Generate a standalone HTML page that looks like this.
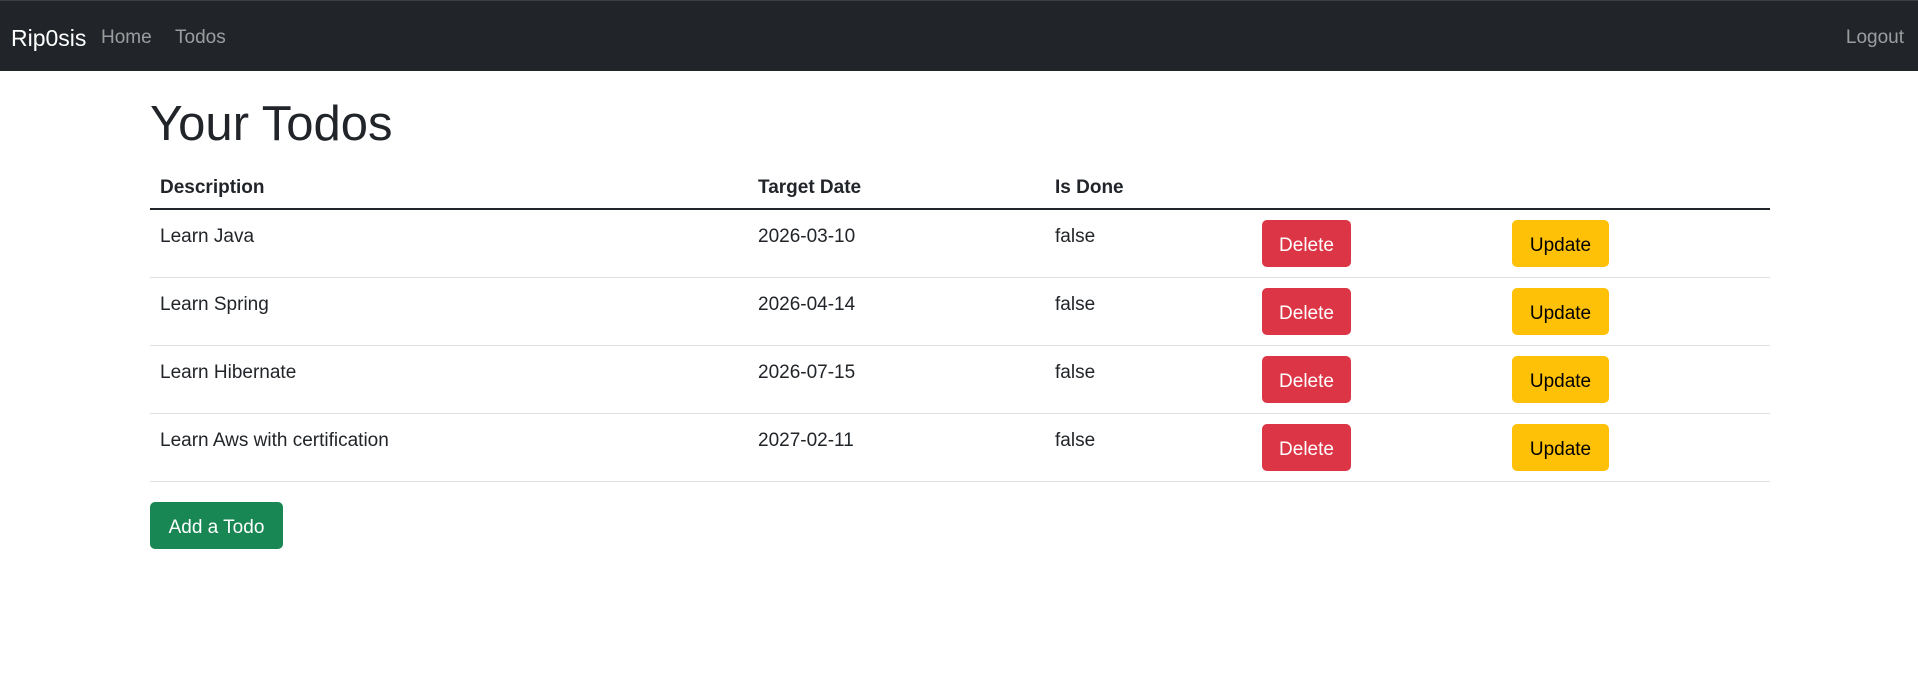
<!DOCTYPE html>
<html><head><meta charset="utf-8"><style>
*{margin:0;padding:0;box-sizing:border-box}
body{width:1918px;height:675px;background:#fff;font-family:"Liberation Sans",sans-serif;color:#212529;position:relative;overflow:hidden;font-size:19px}
.nav{position:absolute;left:0;top:0;width:1918px;height:71px;background:#212529;border-top:1px solid #3a3f44}
.a{position:absolute;white-space:nowrap}
.nav .a{top:26px;color:rgba(255,255,255,.55);font-size:19px}
.h1{font-size:49px;font-weight:500;top:96px;left:150px}
.th{font-weight:bold;top:177px}
.td{top:226px}
.line{position:absolute;left:150px;width:1620px;height:1px;background:#dee2e6}
.btn{position:absolute;height:47px;border-radius:5px;font-size:19px;display:flex;align-items:center;justify-content:center;padding-top:4px}
.del{background:#dc3545;color:#fff;left:1262px;width:89px}
.upd{background:#ffc107;color:#000;left:1512px;width:97px}
</style></head><body>
<div class="nav">
<div class="a" style="left:11px;top:24px;color:#fff;font-size:23px">Rip0sis</div>
<div class="a" style="left:101px">Home</div>
<div class="a" style="left:175px">Todos</div>
<div class="a" style="right:14px">Logout</div>
</div>
<div class="a h1">Your Todos</div>
<div class="a th" style="left:160px">Description</div>
<div class="a th" style="left:758px">Target Date</div>
<div class="a th" style="left:1055px">Is Done</div>
<div class="line" style="top:208px;height:2px;background:#212529"></div>

<div class="a td" style="left:160px">Learn Java</div>
<div class="a td" style="left:758px">2026-03-10</div>
<div class="a td" style="left:1055px">false</div>
<div class="btn del" style="top:220px">Delete</div>
<div class="btn upd" style="top:220px">Update</div>
<div class="line" style="top:277px"></div>

<div class="a td" style="left:160px;top:294px">Learn Spring</div>
<div class="a td" style="left:758px;top:294px">2026-04-14</div>
<div class="a td" style="left:1055px;top:294px">false</div>
<div class="btn del" style="top:288px">Delete</div>
<div class="btn upd" style="top:288px">Update</div>
<div class="line" style="top:345px"></div>

<div class="a td" style="left:160px;top:362px">Learn Hibernate</div>
<div class="a td" style="left:758px;top:362px">2026-07-15</div>
<div class="a td" style="left:1055px;top:362px">false</div>
<div class="btn del" style="top:356px">Delete</div>
<div class="btn upd" style="top:356px">Update</div>
<div class="line" style="top:413px"></div>

<div class="a td" style="left:160px;top:430px">Learn Aws with certification</div>
<div class="a td" style="left:758px;top:430px">2027-02-11</div>
<div class="a td" style="left:1055px;top:430px">false</div>
<div class="btn del" style="top:424px">Delete</div>
<div class="btn upd" style="top:424px">Update</div>
<div class="line" style="top:481px"></div>

<div class="btn" style="left:150px;top:502px;width:133px;background:#198754;color:#fff">Add a Todo</div>
</body></html>
